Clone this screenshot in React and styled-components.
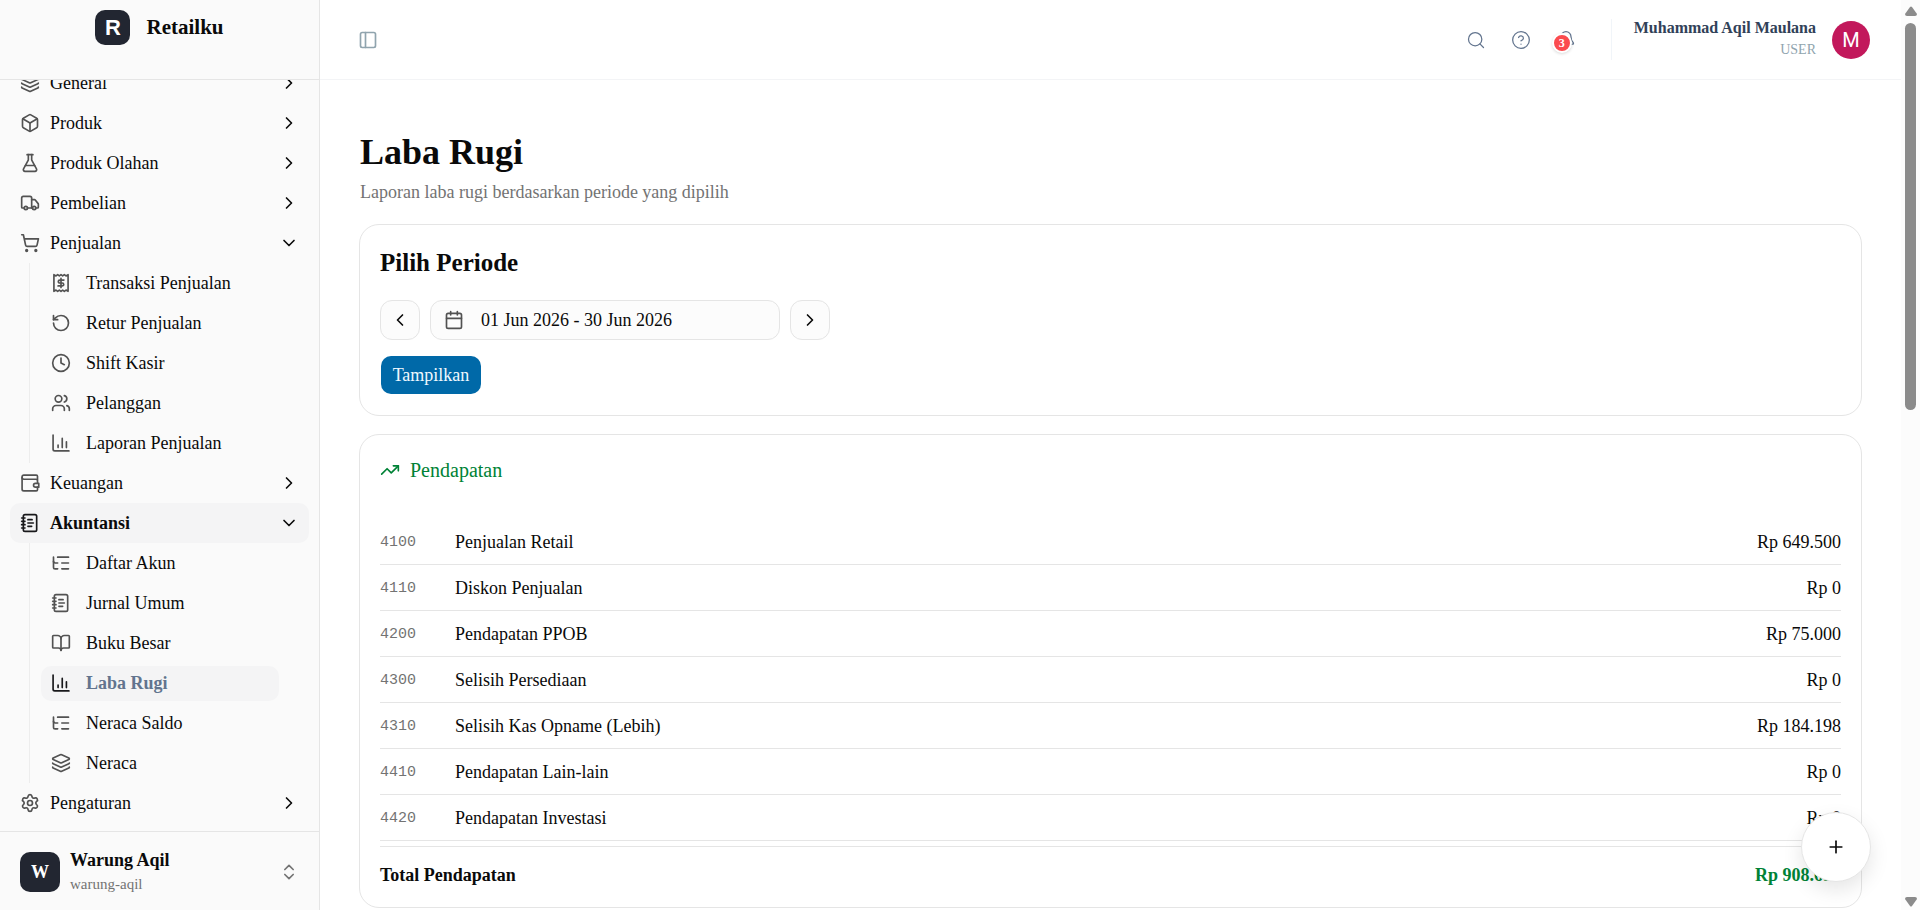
import React from "react";
import styled, { createGlobalStyle } from "styled-components";
import {
  Bell,
  BookOpen,
  Box,
  Calendar,
  ChevronDown,
  ChevronLeft,
  ChevronRight,
  ChevronsUpDown,
  CircleQuestionMark,
  Clock,
  FlaskConical,
  Layers,
  ListTree,
  NotebookText,
  PanelLeft,
  Plus,
  RotateCcw,
  Search,
  Settings,
  ShoppingCart,
  TrendingUp,
  Truck,
  Users,
} from "lucide-react";

const GlobalStyle = createGlobalStyle`
  * {
    box-sizing: border-box;
  }
  body {
    margin: 0;
    background: #fff;
    color: #0a0a0a;
    font-family: "Liberation Serif", "Times New Roman", serif;
    font-size: 18px;
    line-height: 24px;
  }
  h1, h2, p, ul {
    margin: 0;
    padding: 0;
  }
  ul {
    list-style: none;
  }
  a {
    color: inherit;
    text-decoration: none;
  }
  button {
    padding: 0;
    border: 0;
    background: none;
    color: inherit;
    font: inherit;
    cursor: pointer;
  }
  svg {
    flex-shrink: 0;
  }
`;

const Layout = styled.div`
  display: grid;
  grid-template-columns: 320px minmax(0, 1fr) 19px;
  height: 100vh;
  overflow: hidden;
`;

const Sidebar = styled.aside`
  display: flex;
  flex-direction: column;
  min-height: 0;
  background: #fafafa;
  border-right: 1px solid #e5e5e5;
`;

const Brand = styled.div`
  display: flex;
  justify-content: center;
  align-items: flex-start;
  gap: 16px;
  flex: none;
  height: 80px;
  padding-top: 10px;
  border-bottom: 1px solid #e5e5e5;
`;

const BrandMark = styled.span`
  display: flex;
  align-items: center;
  justify-content: center;
  width: 35px;
  height: 35px;
  border-radius: 10px;
  background: #222631;
  color: #fff;
  font-family: "Liberation Sans", Arial, sans-serif;
  font-size: 22px;
  font-weight: 700;
`;

const BrandName = styled.span`
  font-size: 21px;
  font-weight: 700;
  line-height: 35px;
`;

const Nav = styled.nav`
  display: flex;
  flex-direction: column;
  justify-content: flex-end;
  flex: 1;
  min-height: 0;
  padding: 0 10px 8px;
  overflow: hidden;
`;

const NavButton = styled.button`
  display: flex;
  align-items: center;
  gap: 10px;
  width: 100%;
  height: 40px;
  padding: 0 10px;
  border-radius: 10px;
  background: ${(p) => (p.$active ? "#f4f4f5" : "transparent")};
  font-weight: ${(p) => (p.$active ? 700 : 400)};
  text-align: left;

  svg:first-child {
    color: ${(p) => (p.$active ? "#18181b" : "#525252")};
  }
`;

const NavLabel = styled.span`
  flex: 1;
`;

const SubList = styled.ul`
  margin: 0 30px 0 19px;
  padding-left: 11px;
  border-left: 1px solid #ededed;
`;

const SubItem = styled.li`
  padding: 3px 0 2px;
`;

const SubLink = styled.a`
  display: flex;
  align-items: center;
  gap: 15px;
  height: 35px;
  padding: 0 10px 1px;
  border-radius: 10px;
  background: ${(p) => (p.$active ? "#f4f4f5" : "transparent")};
  color: ${(p) => (p.$active ? "#62748e" : "#0a0a0a")};
  font-weight: ${(p) => (p.$active ? 700 : 400)};

  svg {
    color: ${(p) => (p.$active ? "#18181b" : "#525252")};
  }
`;

const StoreSwitch = styled.button`
  display: flex;
  align-items: center;
  gap: 10px;
  flex: none;
  height: 79px;
  padding: 2px 20px 0;
  border-top: 1px solid #e5e5e5;
  text-align: left;

  svg {
    color: #737373;
  }
`;

const StoreMark = styled.span`
  display: flex;
  align-items: center;
  justify-content: center;
  width: 40px;
  height: 40px;
  border-radius: 10px;
  background: #222631;
  color: #fff;
  font-weight: 700;
`;

const StoreText = styled.span`
  display: flex;
  flex: 1;
  flex-direction: column;
`;

const StoreName = styled.span`
  font-weight: 700;
`;

const StoreSlug = styled.span`
  color: #737373;
  font-size: 15px;
`;

const Main = styled.div`
  display: flex;
  flex-direction: column;
  min-height: 0;
  overflow: hidden;
`;

const TopBar = styled.header`
  display: flex;
  align-items: center;
  justify-content: space-between;
  flex: none;
  height: 80px;
  padding: 0 31px 0 38px;
  border-bottom: 1px solid #f3f4f6;
`;

const IconButton = styled.button`
  position: relative;
  display: flex;
  color: ${(p) => (p.$muted ? "#90a4ae" : "#62748e")};
`;

const Actions = styled.div`
  display: flex;
  align-items: center;
  gap: 25px;
`;

const Badge = styled.span`
  position: absolute;
  top: 3px;
  left: -4px;
  display: flex;
  align-items: center;
  justify-content: center;
  width: 20px;
  height: 20px;
  border: 2px solid #fff;
  border-radius: 50%;
  background: #fb4b4e;
  box-shadow: 0 1px 3px rgba(0, 0, 0, 0.15);
  color: #fff;
  font-size: 12px;
  font-weight: 700;
  line-height: 16px;
`;

const Profile = styled.button`
  display: flex;
  align-items: center;
  gap: 16px;
  height: 41px;
  margin-left: 10px;
  padding-left: 22px;
  border-left: 1px solid #f1f5f9;
`;

const ProfileText = styled.span`
  display: flex;
  flex-direction: column;
  padding-bottom: 2px;
  text-align: right;
`;

const ProfileName = styled.span`
  color: #314158;
  font-size: 16px;
  font-weight: 700;
  line-height: 22px;
`;

const ProfileRole = styled.span`
  color: #90a4ae;
  font-size: 14px;
  line-height: 22px;
`;

const Avatar = styled.span`
  display: flex;
  align-items: center;
  justify-content: center;
  width: 38px;
  height: 38px;
  border-radius: 50%;
  background: #c2185b;
  color: #fff;
  font-family: Roboto, sans-serif;
  font-size: 20px;
`;

const Content = styled.main`
  display: flex;
  flex-direction: column;
  gap: 18px;
  padding: 48px 39px 0;
`;

const PageHeading = styled.div`
  padding: 0 1px 2px;
`;

const PageTitle = styled.h1`
  font-size: 36px;
  line-height: 48px;
`;

const PageLead = styled.p`
  padding-top: 4px;
  color: #737373;
`;

const Card = styled.section`
  padding: ${(p) => (p.$compact ? "20px 20px 0" : "20px")};
  border: 1px solid #e5e5e5;
  border-radius: 20px;
`;

const CardTitle = styled.h2`
  font-size: 25px;
  line-height: 36px;
`;

const PeriodRow = styled.div`
  display: flex;
  gap: 10px;
  padding-top: 19px;
`;

const PeriodButton = styled.button`
  display: flex;
  align-items: center;
  justify-content: ${(p) => (p.$wide ? "flex-start" : "center")};
  gap: 17px;
  width: ${(p) => (p.$wide ? "350px" : "40px")};
  height: 40px;
  padding: ${(p) => (p.$wide ? "0 13px" : "0")};
  border: 1px solid #e5e5e5;
  border-radius: 12px;
  background: #fcfcfc;
`;

const SubmitButton = styled.button`
  display: block;
  width: 100px;
  height: 38px;
  margin: 16px 0 1px 1px;
  border-radius: 10px;
  background: #0069a8;
  color: #f0f9ff;
`;

const SectionTitle = styled.h2`
  display: flex;
  align-items: center;
  gap: 10px;
  padding: 3px 0 37px;
  color: #008236;
  font-size: 20px;
  font-weight: 400;
  line-height: 24px;
`;

const Table = styled.table`
  width: 100%;
  border-collapse: separate;
  border-spacing: 0;

  td {
    height: 46px;
    padding: 0;
    border-bottom: 1px solid #e5e5e5;
  }
`;

const CodeCell = styled.td`
  && {
    width: 75px;
    padding-top: 2px;
  }
  color: #737373;
  font-family: "Liberation Mono", monospace;
  font-size: 15px;
`;

const Money = styled.span`
  display: block;
  text-align: right;
  color: ${(p) => (p.$positive ? "#008236" : "inherit")};
`;

const TotalRow = styled.div`
  display: flex;
  align-items: center;
  justify-content: space-between;
  height: 61px;
  margin-top: 5px;
  padding-bottom: 4px;
  border-top: 1px solid #e5e5e5;
  font-weight: 700;
`;

const Fab = styled.button`
  position: fixed;
  right: 49px;
  bottom: 28px;
  display: flex;
  align-items: center;
  justify-content: center;
  width: 70px;
  height: 70px;
  border: 1px solid #e5e5e5;
  border-radius: 50%;
  background: #fff;
  box-shadow: 0 8px 20px rgba(0, 0, 0, 0.1);
`;

const Rail = styled.div`
  display: flex;
  flex-direction: column;
  align-items: center;
  padding: 6px 0 3px;
  background: #fcfcfc;
`;

const RailThumb = styled.div`
  width: 11px;
  height: 43%;
  margin-top: 7px;
  border-radius: 6px;
  background: #8b8b8b;
`;

const RailArrow = styled.svg`
  width: 12px;
  height: 10px;
  margin-top: ${(p) => (p.$end ? "auto" : 0)};
  fill: #8b8b8b;
`;

const salesMenu = [
  { label: "Transaksi Penjualan", icon: ReceiptDollar },
  { label: "Retur Penjualan", icon: RotateCcw },
  { label: "Shift Kasir", icon: Clock },
  { label: "Pelanggan", icon: Users },
  { label: "Laporan Penjualan", icon: ChartBars },
];

const accountingMenu = [
  { label: "Daftar Akun", icon: ListTree },
  { label: "Jurnal Umum", icon: NotebookText },
  { label: "Buku Besar", icon: BookOpen },
  { label: "Laba Rugi", icon: ChartBars, active: true },
  { label: "Neraca Saldo", icon: ListTree },
  { label: "Neraca", icon: Layers },
];

const menu = [
  { label: "General", icon: Layers },
  { label: "Produk", icon: Box },
  { label: "Produk Olahan", icon: FlaskConical },
  { label: "Pembelian", icon: Truck },
  { label: "Penjualan", icon: ShoppingCart, children: salesMenu },
  { label: "Keuangan", icon: WalletCard },
  {
    label: "Akuntansi",
    icon: NotebookText,
    active: true,
    children: accountingMenu,
  },
  { label: "Pengaturan", icon: Settings },
];

const income = [
  { code: "4100", name: "Penjualan Retail", amount: "Rp 649.500" },
  { code: "4110", name: "Diskon Penjualan", amount: "Rp 0" },
  { code: "4200", name: "Pendapatan PPOB", amount: "Rp 75.000" },
  { code: "4300", name: "Selisih Persediaan", amount: "Rp 0" },
  { code: "4310", name: "Selisih Kas Opname (Lebih)", amount: "Rp 184.198" },
  { code: "4410", name: "Pendapatan Lain-lain", amount: "Rp 0" },
  { code: "4420", name: "Pendapatan Investasi", amount: "Rp 0" },
];

function LineIcon({ children }) {
  return (
    <svg
      width="20"
      height="20"
      viewBox="0 0 24 24"
      fill="none"
      stroke="currentColor"
      strokeWidth="2"
      strokeLinecap="round"
      strokeLinejoin="round"
      aria-hidden="true"
    >
      {children}
    </svg>
  );
}

function ReceiptDollar() {
  return (
    <LineIcon>
      <path d="M3.5 22V2l2.5 1.5L8 2l2 1.5L12 2l2 1.500L16 2l2 1.500L20.500 2v20l-2.500-1.500L16 22l-2-1.500L12 22l-2-1.500L8 22l-2-1.500z" />
      <path d="M15.500 8.500h-5a1.750 1.750 0 0 0 0 3.500h3a1.750 1.750 0 0 1 0 3.500h-5M12 6.500v11" />
    </LineIcon>
  );
}

function ChartBars() {
  return (
    <LineIcon>
      <path d="M2.5 2.500v17a2 2 0 0 0 2 2H21.500" />
      <path d="M8.500 17.500v-3M13.500 17.500V6.500M18.500 17.500v-7" />
    </LineIcon>
  );
}

function WalletCard() {
  return (
    <LineIcon>
      <path d="M21 8V4a1.500 1.500 0 0 0-1.500-1.500H4.500a2 2 0 0 0-2 2v15a2 2 0 0 0 2 2h15A1.500 1.500 0 0 0 21 20v-3" />
      <path d="M2.500 5.500a2 2 0 0 0 2 2H19.500A1.500 1.500 0 0 1 21 9v3M22.500 12.500h-4a2 2 0 0 0 0 4.500h4z" />
    </LineIcon>
  );
}

const NavGroup = ({ item }) => {
  const { label, icon: Icon, active, children } = item;
  const Chevron = children ? ChevronDown : ChevronRight;
  return (
    <li>
      <NavButton $active={active} aria-expanded={Boolean(children)}>
        <Icon size={20} />
        <NavLabel>{label}</NavLabel>
        <Chevron size={20} />
      </NavButton>
      {children && (
        <SubList>
          {children.map(({ label, icon: SubIcon, active }) => (
            <SubItem key={label}>
              <SubLink href="#" $active={active}>
                <SubIcon size={20} />
                {label}
              </SubLink>
            </SubItem>
          ))}
        </SubList>
      )}
    </li>
  );
};

const App = () => {
  return (
    <>
      <GlobalStyle />
      <Layout>
        <Sidebar>
          <Brand>
            <BrandMark>R</BrandMark>
            <BrandName>Retailku</BrandName>
          </Brand>
          <Nav>
            <ul>
              {menu.map((item) => (
                <NavGroup key={item.label} item={item} />
              ))}
            </ul>
          </Nav>
          <StoreSwitch>
            <StoreMark>W</StoreMark>
            <StoreText>
              <StoreName>Warung Aqil</StoreName>
              <StoreSlug>warung-aqil</StoreSlug>
            </StoreText>
            <ChevronsUpDown size={20} />
          </StoreSwitch>
        </Sidebar>

        <Main>
          <TopBar>
            <IconButton $muted aria-label="Toggle sidebar">
              <PanelLeft size={20} />
            </IconButton>
            <Actions>
              <IconButton aria-label="Cari">
                <Search size={20} strokeWidth={1.5} />
              </IconButton>
              <IconButton aria-label="Bantuan">
                <CircleQuestionMark size={20} strokeWidth={1.5} />
              </IconButton>
              <IconButton aria-label="Notifikasi">
                <Bell size={20} strokeWidth={1.5} />
                <Badge>3</Badge>
              </IconButton>
              <Profile>
                <ProfileText>
                  <ProfileName>Muhammad Aqil Maulana</ProfileName>
                  <ProfileRole>USER</ProfileRole>
                </ProfileText>
                <Avatar>M</Avatar>
              </Profile>
            </Actions>
          </TopBar>

          <Content>
            <PageHeading>
              <PageTitle>Laba Rugi</PageTitle>
              <PageLead>
                Laporan laba rugi berdasarkan periode yang dipilih
              </PageLead>
            </PageHeading>

            <Card>
              <CardTitle>Pilih Periode</CardTitle>
              <PeriodRow>
                <PeriodButton aria-label="Periode sebelumnya">
                  <ChevronLeft size={20} />
                </PeriodButton>
                <PeriodButton $wide>
                  <Calendar size={20} color="#525252" />
                  01 Jun 2026 - 30 Jun 2026
                </PeriodButton>
                <PeriodButton aria-label="Periode berikutnya">
                  <ChevronRight size={20} />
                </PeriodButton>
              </PeriodRow>
              <SubmitButton>Tampilkan</SubmitButton>
            </Card>

            <Card $compact>
              <SectionTitle>
                <TrendingUp size={20} />
                Pendapatan
              </SectionTitle>
              <Table>
                <tbody>
                  {income.map(({ code, name, amount }) => (
                    <tr key={code}>
                      <CodeCell>{code}</CodeCell>
                      <td>{name}</td>
                      <td>
                        <Money>{amount}</Money>
                      </td>
                    </tr>
                  ))}
                </tbody>
              </Table>
              <TotalRow>
                <span>Total Pendapatan</span>
                <Money $positive>Rp 908.698</Money>
              </TotalRow>
            </Card>
          </Content>
        </Main>

        <Rail>
          <RailArrow viewBox="0 0 12 10">
            <path d="M5 1Q6 0 7 1L12 8Q12 10 10 10H2Q0 10 0 8z" />
          </RailArrow>
          <RailThumb />
          <RailArrow $end viewBox="0 0 12 10">
            <path d="M5 9Q6 10 7 9L12 2Q12 0 10 0H2Q0 0 0 2z" />
          </RailArrow>
        </Rail>
      </Layout>
      <Fab aria-label="Tambah">
        <Plus size={20} />
      </Fab>
    </>
  );
};

export default App;
